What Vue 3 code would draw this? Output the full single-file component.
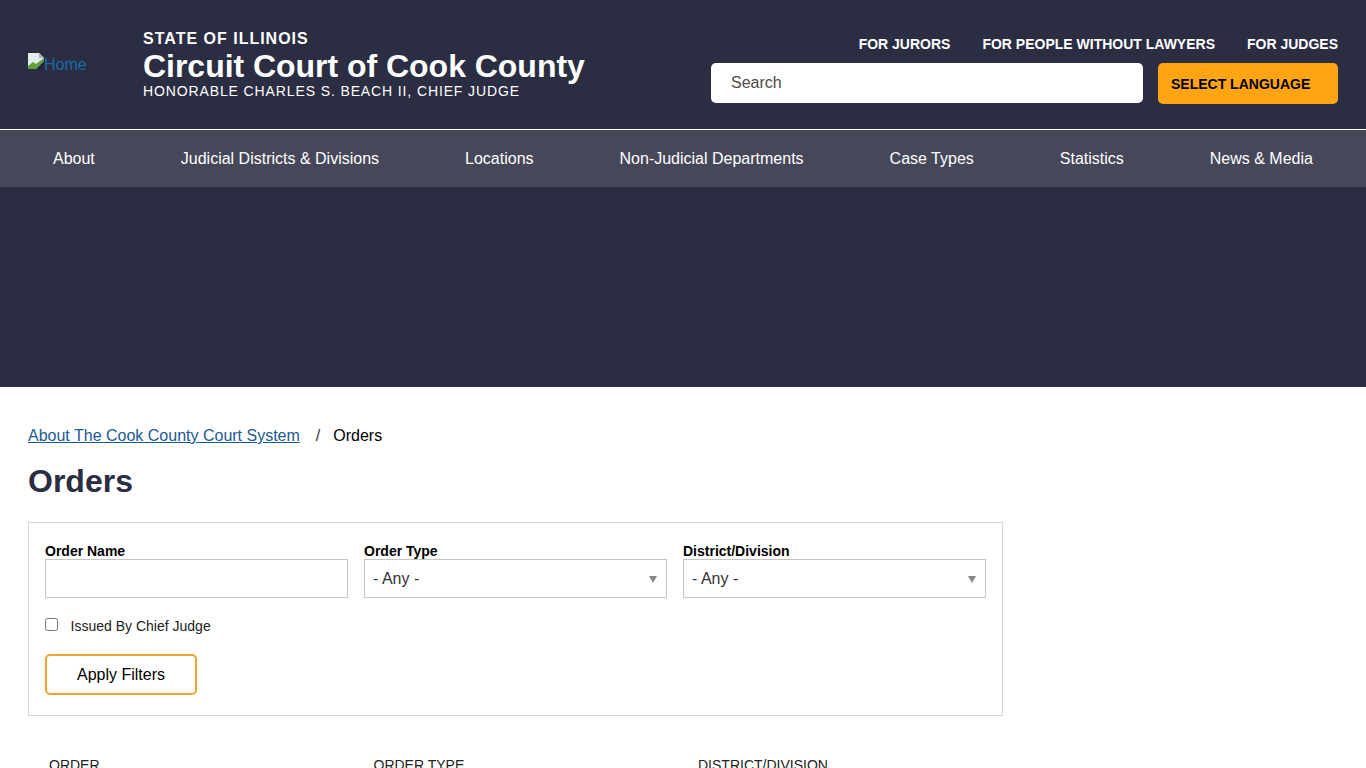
<template>
  <div class="page">
    <header class="site-header">
      <div class="brand">
        <a class="logo" href="#">
          <svg class="broken" width="16" height="16" viewBox="0 0 16 16">
            <path d="M0 0h11l5 5v11H0z" fill="#e4ebec" />
            <path d="M11 0l5 5h-5z" fill="#a9b3b8" />
            <path d="M0 16v-3l5-4 3 2 8-6v3L8 16z" fill="#5fa13a" />
            <path d="M8 16l8-8v8z" fill="#23263a" />
          </svg>
          <span>Home</span>
        </a>
        <div class="titles">
          <div class="state">STATE OF ILLINOIS</div>
          <div class="court">Circuit Court of Cook County</div>
          <div class="judge">HONORABLE CHARLES S. BEACH II, CHIEF JUDGE</div>
        </div>
      </div>
      <div class="tools">
        <div class="quick">
          <a v-for="link in quickLinks" :key="link" href="#">{{ link }}</a>
        </div>
        <div class="search-row">
          <input class="search" type="text" placeholder="Search" />
          <button class="lang">SELECT LANGUAGE</button>
        </div>
      </div>
    </header>

    <nav class="main-nav">
      <a v-for="item in navItems" :key="item" href="#">{{ item }}</a>
    </nav>

    <div class="hero"></div>

    <main class="content">
      <div class="crumbs">
        <a href="#">About The Cook County Court System</a>
        <span class="sep">/</span>
        <span>Orders</span>
      </div>
      <h1>Orders</h1>

      <form class="filters" @submit.prevent>
        <div class="fields">
          <div class="field">
            <label>Order Name</label>
            <input type="text" />
          </div>
          <div class="field" v-for="f in selects" :key="f">
            <label>{{ f }}</label>
            <div class="select">
              <span>- Any -</span>
              <i class="arrow"></i>
            </div>
          </div>
        </div>
        <label class="check">
          <input type="checkbox" />
          <span>Issued By Chief Judge</span>
        </label>
        <button class="apply">Apply Filters</button>
      </form>

      <div class="table-head">
        <div>ORDER</div>
        <div>ORDER TYPE</div>
        <div>DISTRICT/DIVISION</div>
      </div>
    </main>
  </div>
</template>

<script setup>
const quickLinks = ["FOR JURORS", "FOR PEOPLE WITHOUT LAWYERS", "FOR JUDGES"];
const navItems = [
  "About",
  "Judicial Districts & Divisions",
  "Locations",
  "Non-Judicial Departments",
  "Case Types",
  "Statistics",
  "News & Media",
];
const selects = ["Order Type", "District/Division"];
</script>

<style>
html,
body {
  overflow: hidden;
  height: 768px;
}
</style>

<style scoped>
.page {
  font-family: "Liberation Sans", Arial, sans-serif;
  color: #000;
}
a {
  text-decoration: none;
}
.site-header {
  background: #2b2d42;
  height: 129px;
  padding: 0 28px;
  box-sizing: border-box;
  display: flex;
  justify-content: space-between;
}
.brand {
  display: flex;
}
.logo {
  width: 115px;
  margin-top: 53px;
  color: #1a6aa8;
  font-size: 16px;
  line-height: 24px;
  display: flex;
  align-items: flex-start;
}
.broken {
  flex: none;
}
.titles {
  color: #fff;
  padding-top: 30px;
}
.state {
  font-size: 16px;
  font-weight: 700;
  letter-spacing: 1px;
  line-height: 18px;
}
.court {
  font-size: 32px;
  font-weight: 700;
  line-height: 37px;
  letter-spacing: -0.03px;
}
.judge {
  font-size: 14px;
  letter-spacing: 0.88px;
  line-height: 12px;
}
.tools {
  display: flex;
  flex-direction: column;
  align-items: flex-end;
  padding-top: 36px;
}
.quick {
  display: flex;
  gap: 32px;
  height: 27px;
}
.quick a {
  color: #fff;
  font-size: 14px;
  font-weight: 700;
  line-height: 16px;
}
.search-row {
  display: flex;
  gap: 15px;
}
.search {
  width: 432px;
  height: 40px;
  box-sizing: border-box;
  border: 0;
  border-radius: 5px;
  padding: 0 20px;
  font: 16px "Liberation Sans", Arial, sans-serif;
  background: #fff;
}
.search::placeholder {
  color: #4a4a4a;
  opacity: 1;
}
.lang {
  width: 180px;
  height: 41px;
  border: 0;
  border-radius: 5px;
  background: #ffa514;
  color: #000;
  font: 700 14px "Liberation Sans", Arial, sans-serif;
  text-align: left;
  padding: 0 13px;
}
.main-nav {
  border-top: 1px solid #fff;
  background: #46485a;
  height: 57px;
  display: flex;
  justify-content: space-between;
  align-items: center;
  padding: 0 53px;
}
.main-nav a {
  color: #fff;
  font-size: 16px;
}
.hero {
  background: #2b2d42;
  height: 200px;
}
.content {
  padding: 39px 28px 0;
}
.crumbs {
  font-size: 16px;
  line-height: 20px;
}
.crumbs a {
  color: #1a5a96;
  text-decoration: underline;
}
.sep {
  margin: 0 13px 0 16px;
  color: #333;
}
h1 {
  margin: 16px 0 22px;
  color: #2b2d42;
  font-size: 32px;
  line-height: 38px;
}
.filters {
  width: 975px;
  height: 194px;
  box-sizing: border-box;
  border: 1px solid #d6d6d6;
  padding: 21px 16px 0;
}
.fields {
  display: grid;
  grid-template-columns: repeat(3, 303px);
  gap: 16px;
}
.field label {
  display: block;
  font-size: 14px;
  font-weight: 700;
  line-height: 15px;
}
.field input,
.select {
  width: 303px;
  height: 39px;
  box-sizing: border-box;
  border: 1px solid #c4c4c4;
  background: #fff;
  display: block;
}
.select {
  position: relative;
  padding-left: 8px;
  font-size: 16px;
  line-height: 37px;
  color: #333;
}
.arrow {
  position: absolute;
  right: 9px;
  top: 16px;
  border-left: 4px solid transparent;
  border-right: 4px solid transparent;
  border-top: 7px solid #888;
}
.check {
  display: flex;
  align-items: center;
  margin-top: 18px;
  font-size: 14px;
  color: #222;
  height: 20px;
}
.check input {
  width: 13px;
  height: 13px;
  margin: 0 12.6px 0 0;
  position: relative;
  top: -2px;
}
.apply {
  display: block;
  margin-top: 18px;
  width: 152px;
  height: 41px;
  box-sizing: border-box;
  border: 2px solid #f0a42e;
  border-radius: 5px;
  background: #fff;
  font: 16px "Liberation Sans", Arial, sans-serif;
  color: #000;
}
.table-head {
  display: grid;
  grid-template-columns: 324.5px 324.5px 1fr;
  width: 975px;
  padding: 41px 0 0 21px;
  box-sizing: border-box;
  font-size: 14px;
  line-height: 16px;
  color: #222;
}
</style>
